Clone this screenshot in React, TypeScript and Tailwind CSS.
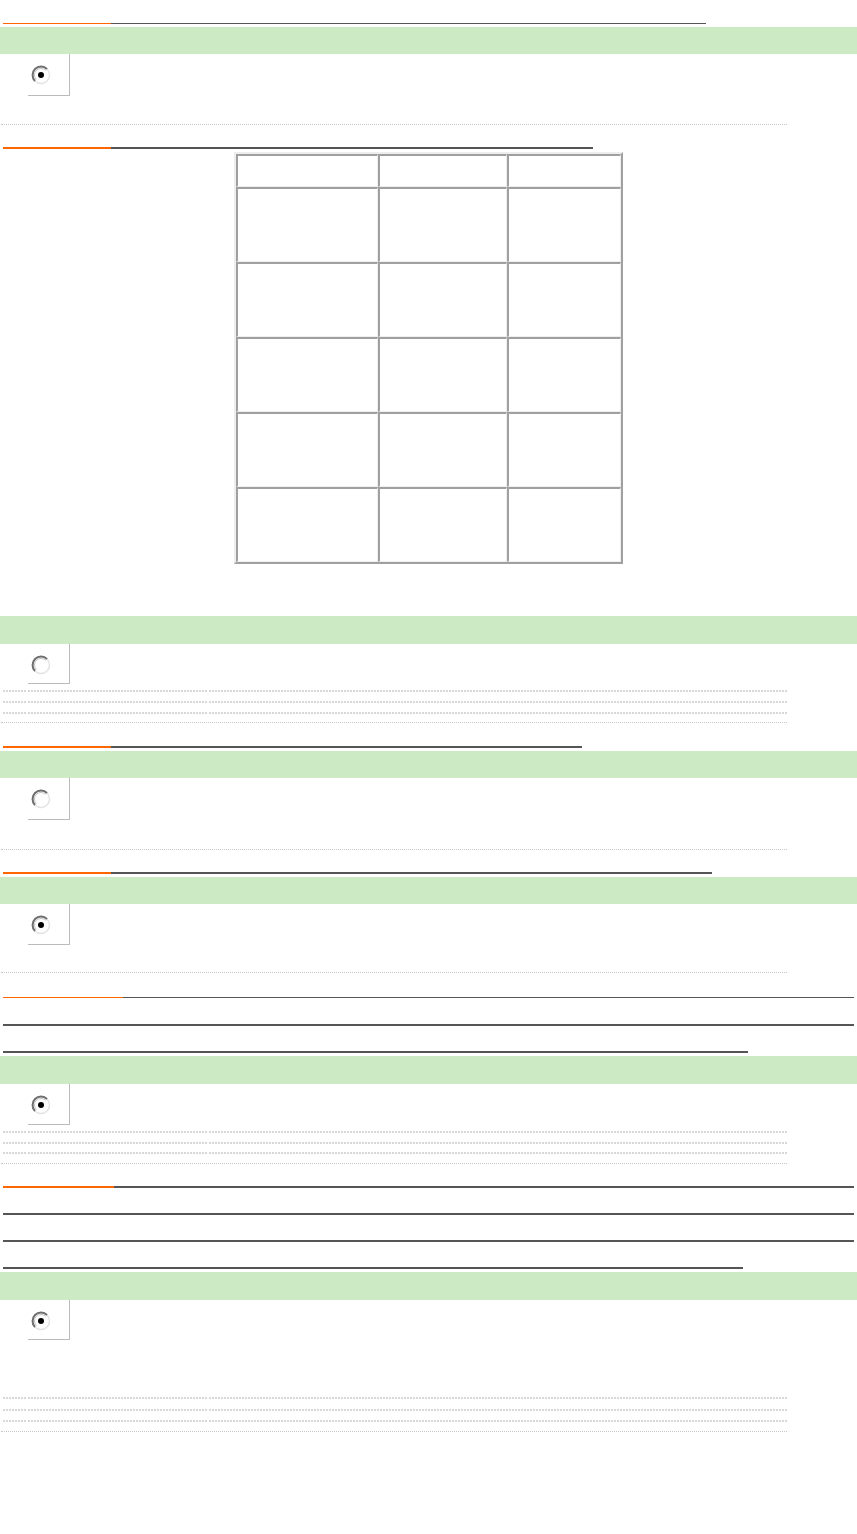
import type { CSSProperties } from 'react'

type Line = { orange?: number; end: number; thin?: boolean }

const DARK = '#555555'
const ORANGE = '#ff6600'

// underline rule of a question title (text itself is blank in the reference)
function Rule({ orange = 0, end, thin }: Line) {
  const w: CSSProperties = { width: end - 3 }
  return (
    <div className={`ml-[3px] flex ${thin ? 'h-px' : 'h-0.5'}`} style={w}>
      {orange > 0 && (
        <div className="h-full shrink-0" style={{ width: orange - 3, background: ORANGE }} />
      )}
      <div className="h-full flex-1" style={{ background: DARK }} />
    </div>
  )
}

function Title({ lines, className = '' }: { lines: Line[]; className?: string }) {
  return (
    <div className={className}>
      {lines.map((l, i) =>
        i < lines.length - 1 ? (
          <div key={i} className="h-[27px]">
            <Rule {...l} />
          </div>
        ) : (
          <Rule key={i} {...l} />
        )
      )}
    </div>
  )
}

function Bar({ className = '' }: { className?: string }) {
  return <div className={`w-full bg-[#cceac4] ${className}`} />
}

function Radio({ checked, className = '' }: { checked?: boolean; className?: string }) {
  return (
    <div className={`ml-[28px] w-[42px] border-r border-b border-[#bbbbbb] pt-[11px] pl-[3px] ${className}`}>
      <svg width="20" height="20" viewBox="0 0 20 20">
        <circle cx="10" cy="10" r="8.5" fill="#fff" stroke="#e4e4e4" strokeWidth="1.5" />
        <path d="M3.99 16.01 A8.5 8.5 0 0 1 16.01 3.99" fill="none" stroke="#6e6e6e" strokeWidth="2" />
        <path d="M5.4 14.6 A6.5 6.5 0 0 1 14.6 5.4" fill="none" stroke="#c4c4c4" strokeWidth="1" />
        {checked && <circle cx="10" cy="10" r="3" fill="#000" />}
      </svg>
    </div>
  )
}

function Thin({ className = '' }: { className?: string }) {
  return <div className={`ml-px w-[786px] border-t border-dotted border-[#c8c8c8] ${className}`} />
}

function Thick({ className = '' }: { className?: string }) {
  const seg = 'h-0.5 bg-[image:repeating-linear-gradient(90deg,#d8d8d8_0_2px,transparent_2px_3px)]'
  return (
    <div className={`ml-[3px] flex gap-px ${className}`}>
      <div className={`w-[24px] ${seg}`} />
      <div className={`w-[50px] ${seg}`} />
      <div className={`w-[129px] ${seg}`} />
      <div className={`w-[578px] ${seg}`} />
    </div>
  )
}

function Grid() {
  const cell = 'border-t-2 border-l-2 border-r border-b border-t-[#a0a0a0] border-l-[#a0a0a0] border-r-[#eeeeee] border-b-[#eeeeee]'
  const rows = [33, 75, 75, 75, 75, 75]
  return (
    <div className="mx-auto w-[389px] border-2 border-t-[#eeeeee] border-l-[#eeeeee] border-r-[#a0a0a0] border-b-[#a0a0a0]">
      {rows.map((h, i) => (
        <div key={i} className="grid grid-cols-[142px_129px_114px]" style={{ height: h }}>
          <div className={cell} />
          <div className={cell} />
          <div className={cell} />
        </div>
      ))}
    </div>
  )
}

export default function App() {
  return (
    <div className="min-h-[1534px] w-[857px] bg-white pt-[23px] font-['Liberation_Sans',sans-serif]">
      {/* 1 */}
      <Title lines={[{ orange: 111, end: 706, thin: true }]} />
      <Bar className="mt-[3px] h-[27px]" />
      <Radio checked className="h-[42px]" />
      <Thin className="mt-[28px]" />

      {/* 2 */}
      <Title className="mt-[22px]" lines={[{ orange: 111, end: 593 }]} />
      <div className="mt-[3px]">
        <Grid />
      </div>
      <Bar className="mt-[52px] h-[28px]" />
      <Radio className="h-[40px]" />
      <Thick className="mt-[6px]" />
      <Thick className="mt-[9px]" />
      <Thick className="mt-[9px]" />
      <Thin className="mt-[8px]" />

      {/* 3 */}
      <Title className="mt-[23px]" lines={[{ orange: 111, end: 582 }]} />
      <Bar className="mt-[3px] h-[27px]" />
      <Radio className="h-[42px]" />
      <Thin className="mt-[29px]" />

      {/* 4 */}
      <Title className="mt-[22px]" lines={[{ orange: 111, end: 712 }]} />
      <Bar className="mt-[3px] h-[27px]" />
      <Radio checked className="h-[41px]" />
      <Thin className="mt-[27px]" />

      {/* 5 */}
      <Title
        className="mt-[24px]"
        lines={[{ orange: 123, end: 854, thin: true }, { end: 854 }, { end: 748 }]}
      />
      <Bar className="mt-[3px] h-[28px]" />
      <Radio checked className="h-[41px]" />
      <Thick className="mt-[6px]" />
      <Thick className="mt-[9px]" />
      <Thick className="mt-[8px]" />
      <Thin className="mt-[9px]" />

      {/* 6 */}
      <Title
        className="mt-[22px]"
        lines={[{ orange: 114, end: 854 }, { end: 854 }, { end: 854 }, { end: 743 }]}
      />
      <Bar className="mt-[3px] h-[28px]" />
      <Radio checked className="h-[40px]" />
      <Thick className="mt-[57px]" />
      <Thick className="mt-[10px]" />
      <Thick className="mt-[9px]" />
      <Thin className="mt-[9px]" />
    </div>
  )
}
